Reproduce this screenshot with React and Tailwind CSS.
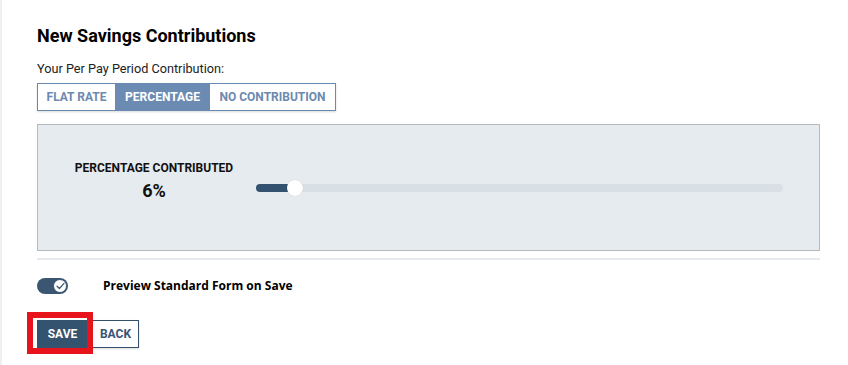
import React, { useState } from 'react';

const roboto = { fontFamily: 'Roboto, "Liberation Sans", sans-serif' };

// --- Segmented control ---
const Segment = ({ options, value, onChange }) => (
  <div className="inline-flex border border-[#6b8ab0] shadow-[0_1px_2px_rgba(0,0,0,0.15)]">
    {options.map((opt) => (
      <button
        key={opt.id}
        onClick={() => onChange(opt.id)}
        className={`h-[26px] text-[12px] font-bold uppercase leading-none ${opt.w} ${
          value === opt.id ? 'bg-[#6b8bb3] text-white' : 'bg-white text-[#6d89ae]'
        }`}
      >
        {opt.label}
      </button>
    ))}
  </div>
);

const Toggle = ({ on }) => (
  <div className="relative w-[31px] h-[16px] rounded-full bg-[#3b5673] shrink-0">
    <div className="absolute right-[1px] top-[1px] w-[14px] h-[14px] rounded-full bg-white border border-[#3b5673] flex items-center justify-center">
      {on && (
        <svg width="9" height="8" viewBox="0 0 9 8" fill="none">
          <path d="M1 4.2 L3.4 6.5 L8 1.3" stroke="#3b5673" strokeWidth="1.2" strokeLinecap="round" strokeLinejoin="round" />
        </svg>
      )}
    </div>
  </div>
);

export default function App() {
  const [mode, setMode] = useState('percentage');
  const pct = 6;

  return (
    <div className="w-full h-[365px] bg-white border-l-2 border-[#eeeef3] pl-[35px] pt-[24px] overflow-hidden" style={roboto}>
      <h1 className="text-[18px] leading-[24px] font-bold text-black">New Savings Contributions</h1>

      <p className="mt-[13px] text-[12.7px] leading-[16px] text-[#222]">Your Per Pay Period Contribution:</p>

      <div className="mt-[6px]">
        <Segment
          value={mode}
          onChange={setMode}
          options={[
            { id: 'flat', label: 'Flat Rate', w: 'w-[77px]' },
            { id: 'percentage', label: 'Percentage', w: 'w-[95px]' },
            { id: 'none', label: 'No Contribution', w: 'w-[125px]' },
          ]}
        />
      </div>

      {/* Percentage panel */}
      <div className="mt-[13px] w-[783px] h-[127px] bg-[#e6ebf0] border border-[#b5b9bd] flex items-center">
        <div className="ml-[36px] w-[160px] mb-[13px] flex flex-col items-center">
          <div className="text-[12px] leading-[14px] font-bold text-[#111] uppercase">Percentage Contributed</div>
          <div className="mt-[5px] text-[18px] leading-[22px] font-bold text-[#111]">{pct}%</div>
        </div>
        <div className="ml-[22px] mr-[36px] flex-1 relative h-[8px] rounded-full bg-[#d9e0e5]">
          <div className="absolute left-0 top-0 h-[8px] w-[39px] rounded-l-full bg-[#33526f]" />
          <div className="absolute left-[31px] top-[-4px] w-4 h-4 rounded-full bg-white shadow-[0_0_1px_rgba(0,0,0,0.2)]" />
        </div>
      </div>

      <div className="mt-[7px] w-[783px] h-[2px] bg-[#e6eaee]" />

      <div className="mt-[18px] flex items-center">
        <Toggle on />
        <span
          className="ml-[35px] text-[12px] leading-[16px] font-bold text-black"
          style={{ fontFamily: '"Open Sans", "Noto Sans", sans-serif' }}
        >
          Preview Standard Form on Save
        </span>
      </div>

      <div className="mt-[26px] flex items-center">
        <span className="relative">
          <button className="w-[51px] h-[28px] bg-[#33536f] text-white text-[12px] font-bold uppercase">Save</button>
          <span className="absolute left-[-10px] top-[-8px] right-[-5px] bottom-[-6px] border-[6px] border-[#e8141c] pointer-events-none" />
        </span>
        <button className="ml-[4px] w-[47px] h-[28px] bg-white border border-[#34506c] text-[#3a5473] text-[12px] font-bold uppercase shadow-[0_1px_2px_rgba(0,0,0,0.15)]">
          Back
        </button>
      </div>
    </div>
  );
}
